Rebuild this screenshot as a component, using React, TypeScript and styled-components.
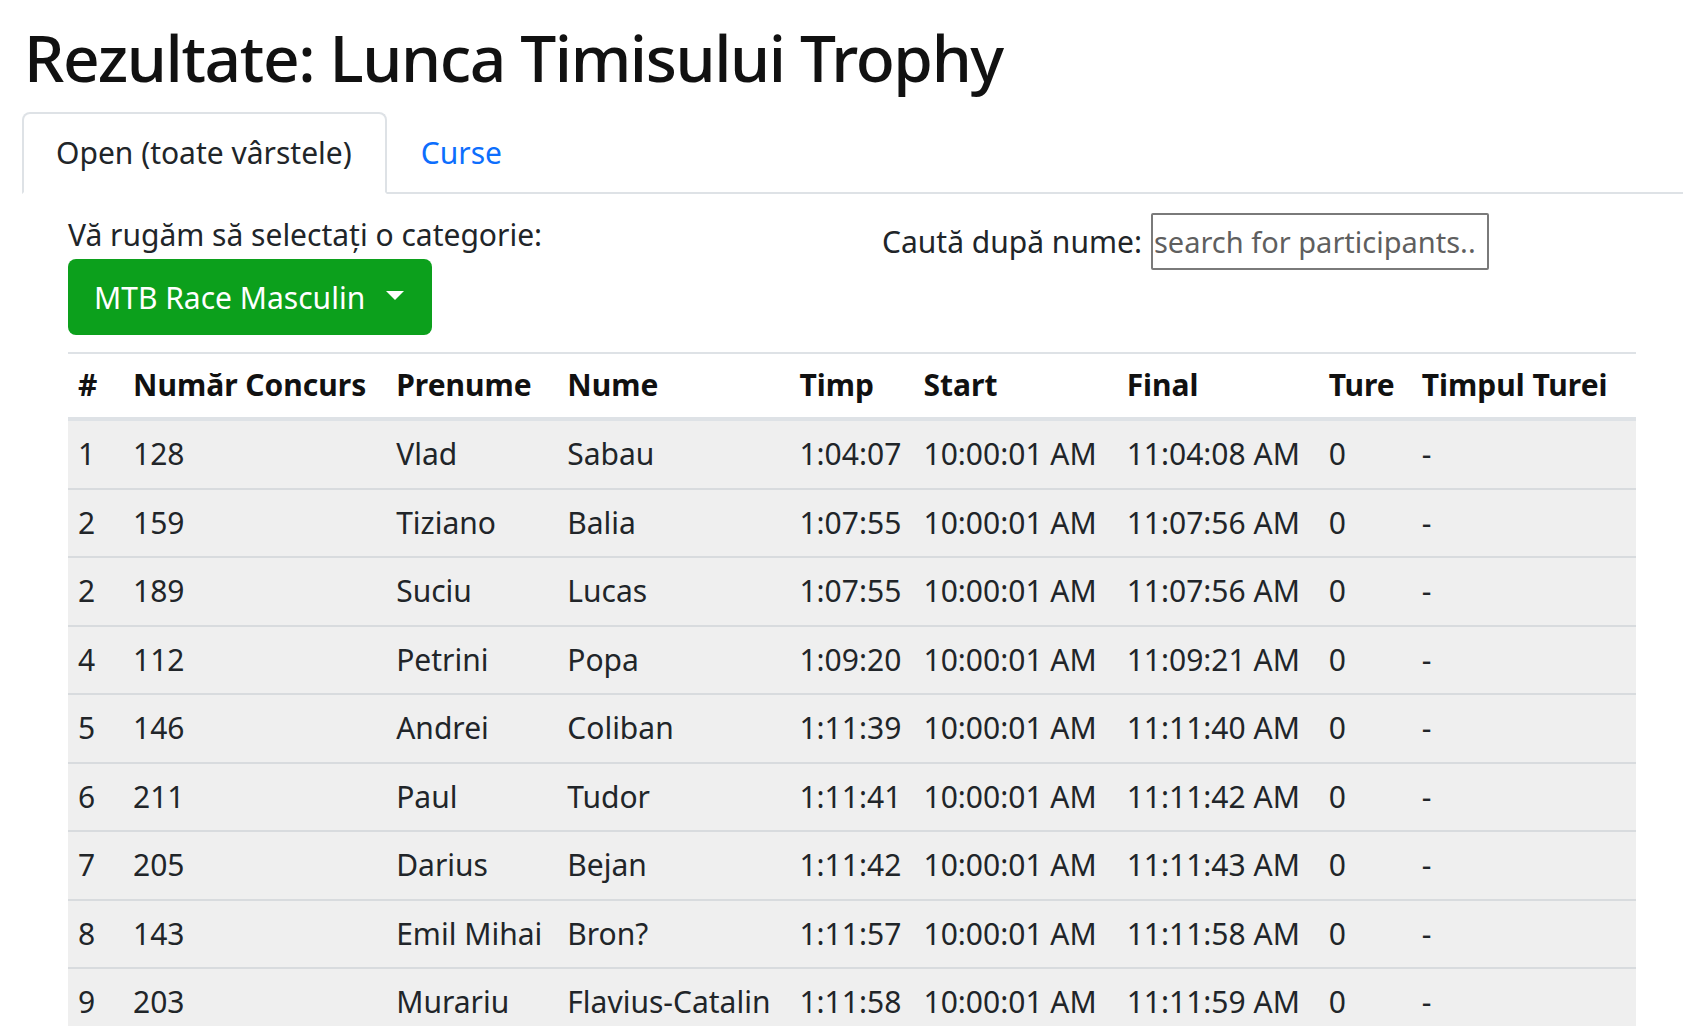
import React from "react";
import styled, { createGlobalStyle } from "styled-components";

const GlobalStyle = createGlobalStyle`
  body {
    margin: 0;
    background: #fff;
    color: #212529;
    font-family: "Noto Sans", "Open Sans", sans-serif;
  }
`;

const Page = styled.div`
  padding: 16px 21px 0 22px;
`;

const Title = styled.h1`
  margin: 0 0 12px 2px;
  font-size: 64px;
  font-weight: 500;
  letter-spacing: -1.4px;
  line-height: 84px;
  color: #111;
`;

const Tabs = styled.ul`
  display: flex;
  margin: 0;
  padding: 0;
  list-style: none;
  border-bottom: 2px solid #dee2e6;
`;

const Tab = styled.li<{ $active?: boolean }>`
  margin-bottom: -2px;
  padding: 15px 33px 15px 32px;
  font-size: 30px;
  line-height: 48px;
  border: 2px solid ${(p) => (p.$active ? "#dee2e6" : "transparent")};
  border-bottom-color: ${(p) => (p.$active ? "#fff" : "transparent")};
  border-radius: 8px 8px 0 0;
  background: ${(p) => (p.$active ? "#fff" : "transparent")};
  color: ${(p) => (p.$active ? "#212529" : "#0d6efd")};
`;

const Content = styled.div`
  padding: 17px 47px 0 46px;
`;

const Controls = styled.div`
  display: grid;
  grid-template-columns: 1fr 1fr;
`;

const Label = styled.div`
  font-size: 30px;
  line-height: 48px;
`;

const Dropdown = styled.button`
  display: inline-flex;
  align-items: center;
  height: 76px;
  padding: 0 28px 0 26px;
  border: none;
  border-radius: 8px;
  background: #0ca01c;
  color: #fff;
  font-family: inherit;
  font-size: 30px;

  &::after {
    content: "";
    margin-left: 21px;
    margin-top: -4px;
    border-top: 9px solid #fff;
    border-left: 9px solid transparent;
    border-right: 9px solid transparent;
  }
`;

const Search = styled.label`
  display: flex;
  align-items: center;
  gap: 9px;
  margin-top: 2px;
  padding-left: 30px;
  font-size: 30px;
  align-self: start;
`;

const SearchInput = styled.input`
  width: 338px;
  height: 57px;
  box-sizing: border-box;
  padding: 0 1px;
  border: 2px solid #7a7a7a;
  border-radius: 2px;
  font-family: inherit;
  font-size: 29px;
  color: #212529;

  &::placeholder {
    color: #5f5f5f;
  }
`;

const Table = styled.table`
  width: 100%;
  margin-top: 17px;
  border-collapse: collapse;
  table-layout: fixed;
  border-top: 2px solid #dee2e6;
  font-size: 30px;
`;

const Th = styled.th`
  padding: 7px 10px 8px;
  line-height: 48px;
  text-align: left;
  font-weight: 700;
  white-space: nowrap;
  color: #111;
  border-bottom: 4px solid #dee2e6;
`;

const Row = styled.tr`
  background: #efefef;
  border-bottom: 2px solid #d8dbde;
`;

const Td = styled.td`
  padding: 9px 10px 9.5px;
  line-height: 48px;
  white-space: nowrap;
`;

const columns = [
  { title: "#", width: 55 },
  { title: "Număr Concurs", width: 263 },
  { title: "Prenume", width: 171 },
  { title: "Nume", width: 232 },
  { title: "Timp", width: 124 },
  { title: "Start", width: 203 },
  { title: "Final", width: 202 },
  { title: "Ture", width: 93 },
  { title: "Timpul Turei", width: 224 },
];

const results = [
  ["1", "128", "Vlad", "Sabau", "1:04:07", "11:04:08 AM"],
  ["2", "159", "Tiziano", "Balia", "1:07:55", "11:07:56 AM"],
  ["2", "189", "Suciu", "Lucas", "1:07:55", "11:07:56 AM"],
  ["4", "112", "Petrini", "Popa", "1:09:20", "11:09:21 AM"],
  ["5", "146", "Andrei", "Coliban", "1:11:39", "11:11:40 AM"],
  ["6", "211", "Paul", "Tudor", "1:11:41", "11:11:42 AM"],
  ["7", "205", "Darius", "Bejan", "1:11:42", "11:11:43 AM"],
  ["8", "143", "Emil Mihai", "Bron?", "1:11:57", "11:11:58 AM"],
  ["9", "203", "Murariu", "Flavius-Catalin", "1:11:58", "11:11:59 AM"],
];

export default function App() {
  return (
    <Page>
      <GlobalStyle />
      <Title>Rezultate: Lunca Timisului Trophy</Title>
      <Tabs>
        <Tab $active>Open (toate vârstele)</Tab>
        <Tab>Curse</Tab>
      </Tabs>
      <Content>
        <Controls>
          <div>
            <Label>Vă rugăm să selectați o categorie:</Label>
            <Dropdown>MTB Race Masculin</Dropdown>
          </div>
          <Search>
            Caută după nume:
            <SearchInput placeholder="search for participants.." />
          </Search>
        </Controls>
        <Table>
          <colgroup>
            {columns.map((c) => (
              <col key={c.title} style={{ width: c.width }} />
            ))}
          </colgroup>
          <thead>
            <tr>
              {columns.map((c) => (
                <Th key={c.title}>{c.title}</Th>
              ))}
            </tr>
          </thead>
          <tbody>
            {results.map(([pos, bib, first, last, time, finish], i) => (
              <Row key={i}>
                <Td>{pos}</Td>
                <Td>{bib}</Td>
                <Td>{first}</Td>
                <Td>{last}</Td>
                <Td>{time}</Td>
                <Td>10:00:01 AM</Td>
                <Td>{finish}</Td>
                <Td>0</Td>
                <Td>-</Td>
              </Row>
            ))}
          </tbody>
        </Table>
      </Content>
    </Page>
  );
}
